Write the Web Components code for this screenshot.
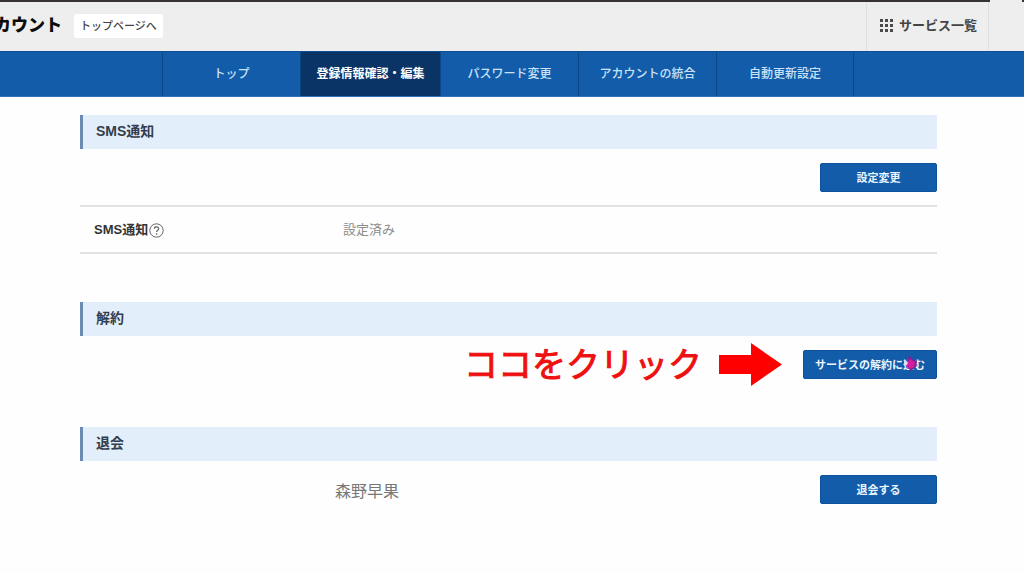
<!DOCTYPE html>
<html lang="ja">
<head>
<meta charset="utf-8">
<meta name="viewport" content="width=device-width, initial-scale=1">
<title>登録情報確認・編集</title>
<style>
  body {
    margin: 0;
    background: #fefefe;
    color: #2b3442;
    font-family: "Liberation Sans", "Noto Sans CJK JP", sans-serif;
    font-size: 13px;
    line-height: 20px;
    overflow-x: hidden;
  }
</style>
</head>
<body>
<account-page></account-page>
<script>
const define = (name, html) => {
  const template = document.createElement('template');
  template.innerHTML = html;
  customElements.define(name, class extends HTMLElement {
    constructor() {
      super();
      this.attachShadow({ mode: 'open' }).append(template.content.cloneNode(true));
    }
  });
};

define('site-header', `
  <style>
    :host { display: block; overflow: hidden; background: #eee; }
    .edge { display: flex; height: 2px; }
    .edge::before { content: ""; flex: 1; background: #373236; }
    .edge::after { content: ""; width: 2px; margin-left: 32px; background: #373236; }
    header { display: flex; align-items: stretch; height: 49px; }
    .brand { display: flex; align-items: center; gap: 12px; margin-left: -6px; padding-bottom: 2px; }
    .name { font-size: 17px; font-weight: 900; color: #0c0c0c; }
    .home {
      padding: 2px 6px; background: #fff; border-radius: 2px;
      color: #444; font-size: 11px; font-weight: 500; text-decoration: none;
    }
    .services {
      display: flex; align-items: center; gap: 6px; margin-left: auto; margin-right: 35px;
      padding: 0 11px 2px 13px; border: solid #e0e0e0; border-width: 0 1px;
      color: #444; font-weight: 700; text-decoration: none;
    }
    svg { display: block; fill: #4a4a4a; }
  </style>
  <div class="edge"></div>
  <header>
    <div class="brand"><span class="name">カウント</span><a class="home" href="#top">トップページへ</a></div>
    <a class="services" href="#services">
      <svg width="13" height="13" viewBox="0 0 13 13" aria-hidden="true">
        <path d="M0 0h3v3H0zM5 0h3v3H5zM10 0h3v3h-3zM0 5h3v3H0zM5 5h3v3H5zM10 5h3v3h-3zM0 10h3v3H0zM5 10h3v3H5zM10 10h3v3h-3z"/>
      </svg>
      サービス一覧
    </a>
  </header>`);

define('nav-bar', `
  <style>
    :host { display: block; background: #125ca9; border-top: 1px solid #0f4f94; border-bottom: 1px solid #2f71b5; box-sizing: border-box; }
    nav { display: flex; justify-content: center; padding-right: 8px; }
  </style>
  <nav><slot></slot></nav>`);

customElements.define('nav-item', class extends HTMLElement {
  constructor() {
    super();
    this.attachShadow({ mode: 'open' }).innerHTML = `
      <style>
        :host { display: block; flex: 0 1 138px; border-left: 1px solid #0b4787; box-sizing: border-box; }
        :host(:last-of-type) { border-right: 1px solid #0b4787; }
        :host([current]) { flex-basis: 140px; background: #0b3466; font-weight: 700; }
        a { display: block; line-height: 44px; text-align: center; color: #c9e2f8; font-size: 12px; font-weight: 500; text-decoration: none; white-space: nowrap; }
        :host([current]) a { color: #fff; font-weight: 700; }
      </style>
      <a href="#"><slot></slot></a>`;
    if (this.hasAttribute('current')) this.shadowRoot.querySelector('a').setAttribute('aria-current', 'page');
  }
});

define('action-button', `
  <style>
    :host { display: block; position: relative; }
    button {
      display: block; min-width: 117px; height: 29px; padding: 0 11px; box-sizing: border-box;
      border: 1px solid #0d529c; border-radius: 2px; background: #125ca9;
      color: #eaf5ff; font: 700 11px/20px "Liberation Sans", "Noto Sans CJK JP", sans-serif; white-space: nowrap;
    }
  </style>
  <button type="button"><slot></slot></button>
  <slot name="pointer"></slot>`);

define('click-pointer', `
  <style>
    :host { position: absolute; right: 18px; top: 5px; }
    svg { display: block; }
  </style>
  <svg width="16" height="18" viewBox="0 0 16 18" aria-hidden="true">
    <path d="M6 0l3 4 5 2-1 6-5 4-5-5 1-5z" fill="#7a2596"/>
    <path d="M7 4l5 3-1 5-4 2-5-4 3-3z" fill="#d51c9c"/>
    <path d="M1 6l4 1-1 3-3 1z" fill="#d9def5"/>
  </svg>`);

define('section-block', `
  <style>
    :host { display: block; }
    h2 {
      margin: 0; padding: 6px 13px 8px; border-left: 3px solid #6c8bb2; background: #e3eefb;
      color: #333d4d; font-size: 14px; line-height: 20px; font-weight: 700;
    }
    .actions { display: flex; align-items: center; justify-content: flex-end; height: 29px; margin-top: 14px; }
  </style>
  <section>
    <h2><slot name="title"></slot></h2>
    <div class="actions"><slot name="actions"></slot></div>
    <slot></slot>
  </section>`);

define('setting-table', `
  <style>
    :host { display: block; margin-top: 13px; }
    table { width: 100%; border-collapse: collapse; table-layout: fixed; }
    th, td { padding: 13px 0 12px; border: solid #e2e2e2; border-width: 2px 0; line-height: 20px; font-size: 13px; text-align: left; }
    th { width: 263px; padding-left: 14px; box-sizing: border-box; color: #333; }
    td { color: #8c8c8c; }
    .label { display: flex; align-items: center; gap: 1px; }
    svg { display: block; fill: none; stroke: #666; }
  </style>
  <table><tbody><tr>
    <th scope="row"><span class="label"><slot name="label"></slot>
      <svg width="15" height="15" viewBox="0 0 15 15" role="img" aria-label="ヘルプ">
        <circle cx="7.5" cy="7.5" r="6.7"/>
        <path d="M5.4 5.8c.1-2.8 4.4-2.6 4.2 0-.1 1.3-2 1.5-2 3.2M7.6 10.2v1.5" stroke-width="1.3"/>
      </svg></span></th>
    <td><slot name="value"></slot></td>
  </tr></tbody></table>`);

define('click-hint', `
  <style>
    :host { display: flex; align-items: center; gap: 17px; margin-right: 21px; color: #ee1111; font-size: 34px; line-height: 40px; font-weight: 400; -webkit-text-stroke: 1px currentColor; white-space: nowrap; }
    svg { display: block; fill: #f00; }
  </style>
  <slot></slot>
  <svg width="63" height="43" viewBox="0 0 63 43" aria-hidden="true"><path d="M0 12h32V0l31 21.500L32 43V31H0z"/></svg>`);

define('account-page', `
  <style>
    :host { display: block; }
    main { display: grid; gap: 48px; margin: 0 87px 0 80px; padding: 18px 0 48px; }
    .user { margin-right: auto; padding: 4px 0 0 255px; color: #777; font-size: 16px; }
  </style>
  <site-header></site-header>
  <nav-bar>
    <nav-item>トップ</nav-item>
    <nav-item current>登録情報確認・編集</nav-item>
    <nav-item>パスワード変更</nav-item>
    <nav-item>アカウントの統合</nav-item>
    <nav-item>自動更新設定</nav-item>
  </nav-bar>
  <main>
    <section-block>
      <span slot="title">SMS通知</span>
      <action-button slot="actions">設定変更</action-button>
      <setting-table><span slot="label">SMS通知</span><span slot="value">設定済み</span></setting-table>
    </section-block>
    <section-block>
      <span slot="title">解約</span>
      <click-hint slot="actions">ココをクリック</click-hint>
      <action-button slot="actions">サービスの解約に進む<click-pointer slot="pointer"></click-pointer></action-button>
    </section-block>
    <section-block>
      <span slot="title">退会</span>
      <span class="user" slot="actions">森野早果</span>
      <action-button slot="actions">退会する</action-button>
    </section-block>
  </main>`);
</script>
</body>
</html>
